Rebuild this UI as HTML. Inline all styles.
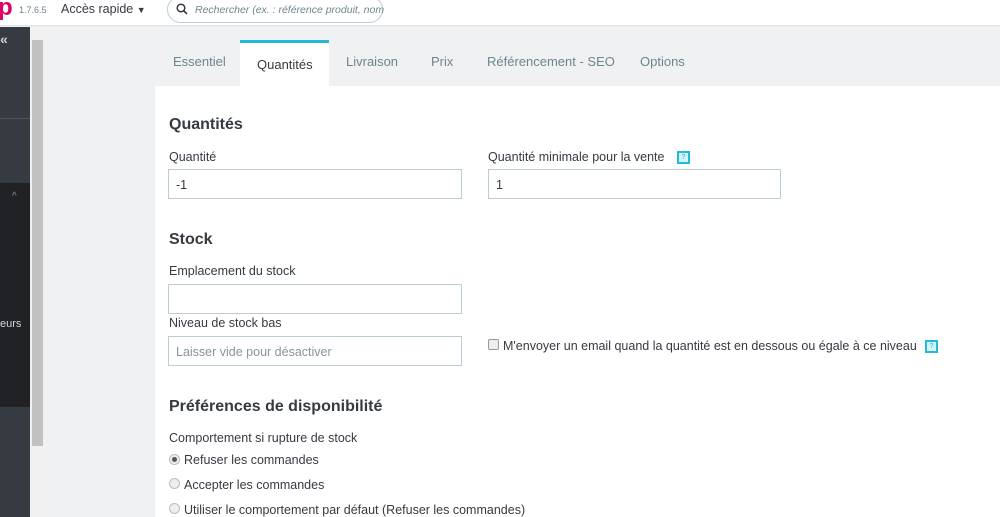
<!DOCTYPE html>
<html><head><meta charset="utf-8"><style>
*{box-sizing:border-box;margin:0;padding:0}
body{width:1000px;height:517px;overflow:hidden;background:#eff1f2;font-family:"Liberation Sans",sans-serif;position:relative;color:#363a41}
.top{position:absolute;left:0;top:0;width:1000px;height:26px;background:#fff;border-bottom:1px solid #e0e3e5}
.abs{position:absolute}
.side{position:absolute;left:0;top:27px;width:30px;height:490px;background:#363a41}
.scroll{position:absolute;left:30px;top:27px;width:14px;height:490px;background:#f1f1f1}
.thumb{position:absolute;left:32px;top:40px;width:11px;height:406px;background:#c1c1c1}
.tab{position:absolute;top:54px;font-size:13px;color:#6c868e}
.panel{position:absolute;left:155px;top:86px;width:845px;height:431px;background:#fff}
h2{position:absolute;font-size:16px;font-weight:bold;color:#363a41}
.lbl{position:absolute;font-size:12.5px;color:#363a41}
.inp{position:absolute;height:30px;border:1px solid #bbcdd2;background:#fff;font-size:12.5px;padding:8px 7px;color:#363a41}
.help{position:absolute;width:13px;height:13px;border:2px solid #25b9d7;background:#d4f3fa;color:#25b9d7;font-size:7px;text-align:center;line-height:9px}
.radio{position:absolute;width:11px;height:11px;border-radius:50%;border:1px solid #bbb;background:#eee}
</style></head><body>
<div class="top">
<div class="abs" style="left:-2px;top:-6px;color:#df0067;font-size:24px;font-weight:bold">p</div>
<div class="abs" style="left:19px;top:5px;font-size:9px;color:#6c868e">1.7.6.5</div>
<div class="abs" style="left:61px;top:2px;font-size:12.5px;color:#363a41">Accès rapide <span style="font-size:9px">▼</span></div>
<div class="abs" style="left:167px;top:-4px;width:216px;height:27px;border:1px solid #bbcdd2;border-radius:14px;background:#fff"></div>
<svg class="abs" style="left:176px;top:3px" width="12" height="12" viewBox="0 0 12 12"><circle cx="5" cy="5" r="3.8" fill="none" stroke="#363a41" stroke-width="1.5"/><path d="M8 8l3 3" stroke="#363a41" stroke-width="1.6"/></svg>
<div class="abs" style="left:195px;top:4px;font-size:10.5px;font-style:italic;color:#6c868e">Rechercher (ex. : référence produit, nom</div>
</div>
<div class="side">
<div class="abs" style="left:0;top:4px;color:#cfd6d9;font-size:14px;font-weight:bold">«</div>
<div class="abs" style="left:0;top:91px;width:30px;height:1px;background:#50555c"></div>
<div class="abs" style="left:0;top:156px;width:30px;height:224px;background:#202226"></div>
<div class="abs" style="left:12px;top:164px;color:#8a9399;font-size:10px">^</div>
<div class="abs" style="left:0;top:291px;color:#cfd6d9;font-size:11px">eurs</div>
</div>
<div class="scroll"></div><div class="thumb"></div>
<div class="abs" style="left:240px;top:40px;width:89px;height:46px;background:#fff;border-top:3px solid #25b9d7"></div>
<div class="tab" style="left:173px">Essentiel</div>
<div class="tab" style="left:257px;top:57px;color:#363a41">Quantités</div>
<div class="tab" style="left:346px">Livraison</div>
<div class="tab" style="left:431px">Prix</div>
<div class="tab" style="left:487px">Référencement - SEO</div>
<div class="tab" style="left:640px">Options</div>
<div class="panel"></div>
<h2 style="left:169px;top:116px">Quantités</h2>
<div class="lbl" style="left:169px;top:150px">Quantité</div>
<div class="inp" style="left:168px;top:169px;width:294px">-1</div>
<div class="lbl" style="left:488px;top:150px">Quantité minimale pour la vente</div>
<div class="help" style="left:677px;top:151px">?</div>
<div class="inp" style="left:488px;top:169px;width:293px">1</div>
<h2 style="left:169px;top:231px">Stock</h2>
<div class="lbl" style="left:169px;top:264px">Emplacement du stock</div>
<div class="inp" style="left:168px;top:284px;width:294px"></div>
<div class="lbl" style="left:169px;top:316px">Niveau de stock bas</div>
<div class="inp" style="left:168px;top:336px;width:294px;color:#8a9399">Laisser vide pour désactiver</div>
<div class="abs" style="left:488px;top:339px;width:11px;height:11px;border:1px solid #999;background:#eee;border-radius:2px"></div>
<div class="lbl" style="left:503px;top:339px">M'envoyer un email quand la quantité est en dessous ou égale à ce niveau</div>
<div class="help" style="left:925px;top:340px">?</div>
<h2 style="left:169px;top:398px">Préférences de disponibilité</h2>
<div class="lbl" style="left:169px;top:431px">Comportement si rupture de stock</div>
<div class="radio" style="left:169px;top:454px"><div style="width:5px;height:5px;border-radius:50%;background:#555;margin:2px"></div></div>
<div class="lbl" style="left:184px;top:453px">Refuser les commandes</div>
<div class="radio" style="left:169px;top:478px"></div>
<div class="lbl" style="left:184px;top:478px">Accepter les commandes</div>
<div class="radio" style="left:169px;top:503px"></div>
<div class="lbl" style="left:184px;top:503px">Utiliser le comportement par défaut (Refuser les commandes)</div>
</body></html>
